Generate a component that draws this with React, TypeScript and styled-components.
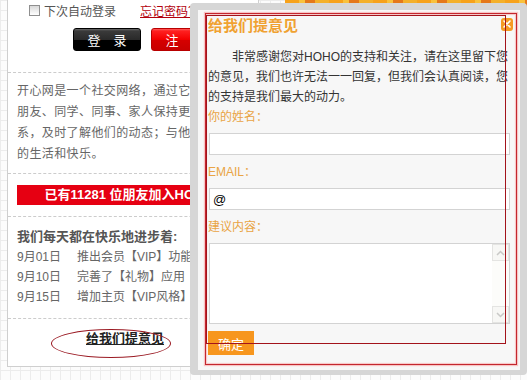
import styled, { createGlobalStyle } from 'styled-components'

const GlobalStyle = createGlobalStyle`
  body {
    margin: 0;
    font-family: "Liberation Sans", "Noto Sans CJK SC", sans-serif;
    background-color: #fcfcfc;
    background-image:
      linear-gradient(#ececec 1px, transparent 1px),
      linear-gradient(90deg, #ececec 1px, transparent 1px);
    background-size: 10px 10px;
  }
`

const Page = styled.div`
  position: relative;
  width: 527px;
  height: 380px;
  overflow: hidden;
  display: flex;
  align-items: flex-start;
`

const LeftPanel = styled.div`
  margin-left: 7px;
  width: 250px;
  background: #fff;
  border: 1px solid #cfcfcf;
  border-top: none;
  padding-bottom: 17px;
`

const LoginRow = styled.div`
  display: flex;
  align-items: center;
  height: 20px;
  padding-left: 21px;
  font-size: 12px;
  color: #555;
`

const Check = styled.input`
  appearance: none;
  width: 11px;
  height: 11px;
  margin: 0 4px 0 0;
  border: 1px solid #8f8f8f;
  background: linear-gradient(#d9d9d9, #fff);
`

const Forgot = styled.a`
  margin-left: 24px;
  color: #b3000c;
  text-decoration: underline;
  white-space: nowrap;
`

const ButtonRow = styled.div`
  display: flex;
  gap: 10px;
  margin-top: 8px;
  padding-left: 65px;
`

const LoginButton = styled.button<{ $tone: 'black' | 'red' }>`
  flex: none;
  width: 68px;
  height: 23px;
  padding: 0;
  border-radius: 3px;
  font-family: inherit;
  font-size: 13px;
  color: #fff;
  border: 1px solid ${p => (p.$tone === 'black' ? '#000' : '#b80000')};
  background: ${p =>
    p.$tone === 'black'
      ? 'linear-gradient(#6a6a6a 0, #3a3a3a 2px, #2a2a2a 50%, #000 51%, #000 100%)'
      : 'linear-gradient(#ff5a5a 0, #ff2020 2px, #f30000 50%, #d60000 51%, #c80000 100%)'};
`

const Divider = styled.div<{ $gap: number }>`
  margin-top: ${p => p.$gap}px;
  border-top: 1px dashed #cccccc;
`

const Intro = styled.p`
  margin: 8px 0 0;
  padding-left: 9px;
  width: 226px;
  font-size: 12px;
  letter-spacing: 0.4px;
  line-height: 21px;
  color: #666;
`

const JoinBar = styled.div`
  margin: 11px 0 0 9px;
  width: 224px;
  height: 20px;
  line-height: 20px;
  background: #e60012;
  color: #fff;
  font-size: 13px;
  font-weight: bold;
  text-align: center;
  white-space: nowrap;
`

const NewsTitle = styled.div`
  margin-top: 10px;
  padding-left: 9px;
  line-height: 20px;
  font-size: 13px;
  font-weight: bold;
  color: #555;
`

const NewsList = styled.ul`
  list-style: none;
  margin: 0;
  padding: 0 0 0 9px;
`

const NewsItem = styled.li`
  display: flex;
  line-height: 20px;
  font-size: 12px;
  color: #666;
  white-space: nowrap;
`

const NewsDate = styled.span`
  width: 60px;
  flex: none;
`

const FeedbackRow = styled.div`
  margin-top: 9px;
  padding-left: 78px;
  line-height: 20px;
`

const FeedbackLink = styled.a`
  position: relative;
  font-size: 13px;
  font-weight: bold;
  color: #222;
  text-decoration: underline;
`

const Circle = styled.span`
  position: absolute;
  left: -35px;
  top: -2px;
  width: 120px;
  height: 29px;
  box-sizing: border-box;
  border: 1px solid #9b1b24;
  border-radius: 50%;
  pointer-events: none;
`

const Banner = styled.div`
  margin-left: 26px;
  width: 242px;
  height: 60px;
  background: repeating-linear-gradient(
    90deg,
    #f7a21b 0 14px,
    #f9c23c 14px 20px,
    #e5781a 20px 30px,
    #f4b02a 30px 44px
  );
`

const Dialog = styled.div`
  position: absolute;
  left: 190px;
  top: 3px;
  width: 337px;
  height: 372px;
  box-sizing: border-box;
  padding: 7px 7px 5px 8px;
  background: #d6d6d6;
  border-radius: 4px;
`

const DialogBody = styled.div`
  height: 100%;
  box-sizing: border-box;
  padding: 3px 3px 5px 7px;
  background: #f7f7f7;
`

const DialogBox = styled.div`
  position: relative;
  height: 100%;
  box-sizing: border-box;
  padding: 0 3px 0 2px;
  border: 1px solid #c3262e;
  box-shadow: 0 0 1px 1px #f7c4c4, inset 0 0 1px 1px #f7c4c4;
`

const FormOutline = styled.div`
  position: absolute;
  left: 0;
  top: 1px;
  width: 300px;
  height: 329px;
  box-sizing: border-box;
  border: 1px solid #a3131b;
  pointer-events: none;
`

const TitleRow = styled.div`
  display: flex;
  justify-content: space-between;
  align-items: center;
  height: 20px;
`

const Title = styled.h2`
  margin: 0;
  font-size: 15px;
  font-weight: bold;
  color: #f0a232;
`

const CloseButton = styled.button`
  display: flex;
  align-items: center;
  justify-content: center;
  width: 12px;
  height: 13px;
  padding: 0;
  border: none;
  border-radius: 3px;
  background: #f59a23;
`

const Notice = styled.p`
  margin: 13px 0 0;
  width: 302px;
  text-indent: 2em;
  font-size: 12px;
  line-height: 20px;
  color: #333;
`

const FieldLabel = styled.label<{ $gap: number }>`
  display: block;
  margin-top: ${p => p.$gap}px;
  line-height: 20px;
  font-size: 12px;
  color: #e9a444;
`

const TextField = styled.input`
  display: block;
  margin: 6px 0 0 1px;
  width: 301px;
  height: 22px;
  box-sizing: border-box;
  padding: 0 3px;
  border: 1px solid #d3d3d3;
  background: #fff;
  font-family: inherit;
  font-size: 13px;
  color: #000;
  outline: none;
`

const TextAreaBox = styled.div`
  display: flex;
  margin: 6px 0 0 1px;
  width: 301px;
  height: 81px;
  box-sizing: border-box;
  border: 1px solid #d3d3d3;
  background: #fff;
`

const TextArea = styled.textarea`
  flex: 1;
  min-width: 0;
  padding: 2px 3px;
  border: none;
  background: transparent;
  resize: none;
  overflow: hidden;
  font-family: inherit;
  font-size: 13px;
  outline: none;
`

const ScrollRail = styled.div`
  flex: none;
  width: 17px;
  display: flex;
  flex-direction: column;
  justify-content: space-between;
  background: #fcfcfa;
`

const ScrollArrow = styled.span`
  display: flex;
  align-items: center;
  justify-content: center;
  height: 17px;
  box-sizing: border-box;
  border: 1px solid #e4e4e2;
  background: #f7f7f5;
`

const Submit = styled.button`
  display: block;
  margin-top: 7px;
  width: 46px;
  height: 24px;
  padding: 0;
  border: none;
  background: #f7961e;
  color: #fff;
  font-family: inherit;
  font-size: 13px;
`

const news = [
  { date: '9月01日', text: '推出会员【VIP】功能' },
  { date: '9月10日', text: '完善了【礼物】应用' },
  { date: '9月15日', text: '增加主页【VIP风格】' },
]

function Chevron({ up }: { up?: boolean }) {
  return (
    <svg width="9" height="6" viewBox="0 0 9 6">
      <path
        d={up ? 'M1 5 L4.5 1.5 L8 5' : 'M1 1 L4.5 4.5 L8 1'}
        fill="none"
        stroke="#c9c9c7"
        strokeWidth="1.5"
      />
    </svg>
  )
}

export default function App() {
  return (
    <Page>
      <GlobalStyle />
      <LeftPanel>
        <LoginRow>
          <Check type="checkbox" />
          <span>下次自动登录</span>
          <Forgot>忘记密码？</Forgot>
        </LoginRow>
        <ButtonRow>
          <LoginButton $tone="black">登　录</LoginButton>
          <LoginButton $tone="red">注　册</LoginButton>
        </ButtonRow>
        <Divider $gap={21} />
        <Intro>
          开心网是一个社交网络，通过它你可以与朋友、同学、同事、家人保持更紧密的联系，及时了解他们的动态；与他们分享你的生活和快乐。
        </Intro>
        <Divider $gap={8} />
        <JoinBar>已有11281 位朋友加入HOHO</JoinBar>
        <Divider $gap={11} />
        <NewsTitle>我们每天都在快乐地进步着:</NewsTitle>
        <NewsList>
          {news.map(n => (
            <NewsItem key={n.date}>
              <NewsDate>{n.date}</NewsDate>
              <span>{n.text}</span>
            </NewsItem>
          ))}
        </NewsList>
        <Divider $gap={11} />
        <FeedbackRow>
          <FeedbackLink>
            给我们提意见
            <Circle />
          </FeedbackLink>
        </FeedbackRow>
      </LeftPanel>
      <Banner />

      <Dialog>
        <DialogBody>
          <DialogBox>
            <TitleRow>
              <Title>给我们提意见</Title>
              <CloseButton aria-label="关闭">
                <svg width="8" height="8" viewBox="0 0 8 8">
                  <path d="M1 1 L7 7 M7 1 L1 7" stroke="#fff" strokeWidth="1.6" strokeLinecap="round" />
                </svg>
              </CloseButton>
            </TitleRow>
            <Notice>
              非常感谢您对HOHO的支持和关注，请在这里留下您的意见，我们也许无法一一回复，但我们会认真阅读，您的支持是我们最大的动力。
            </Notice>
            <FieldLabel $gap={0}>你的姓名：</FieldLabel>
            <TextField type="text" />
            <FieldLabel $gap={7}>EMAIL：</FieldLabel>
            <TextField type="text" defaultValue="@" />
            <FieldLabel $gap={7}>建议内容：</FieldLabel>
            <TextAreaBox>
              <TextArea />
              <ScrollRail>
                <ScrollArrow><Chevron up /></ScrollArrow>
                <ScrollArrow><Chevron /></ScrollArrow>
              </ScrollRail>
            </TextAreaBox>
            <Submit>确定</Submit>
            <FormOutline />
          </DialogBox>
        </DialogBody>
      </Dialog>
    </Page>
  )
}
